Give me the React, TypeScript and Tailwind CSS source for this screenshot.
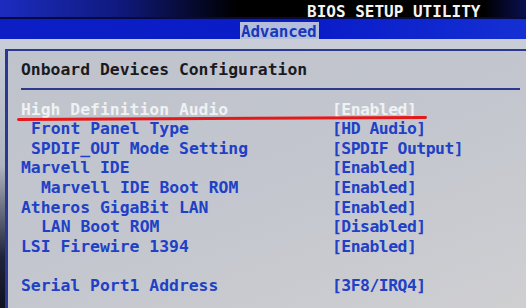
const rows: { label: string; value: string; indent: number; active?: boolean }[] = [
  { label: "High Definition Audio", value: "[Enabled]", indent: 0, active: true },
  { label: "Front Panel Type", value: "[HD Audio]", indent: 1 },
  { label: "SPDIF_OUT Mode Setting", value: "[SPDIF Output]", indent: 1 },
  { label: "Marvell IDE", value: "[Enabled]", indent: 0 },
  { label: "Marvell IDE Boot ROM", value: "[Enabled]", indent: 2 },
  { label: "Atheros GigaBit LAN", value: "[Enabled]", indent: 0 },
  { label: "LAN Boot ROM", value: "[Disabled]", indent: 2 },
  { label: "LSI Firewire 1394", value: "[Enabled]", indent: 0 },
  { label: "", value: "", indent: 0 },
  { label: "Serial Port1 Address", value: "[3F8/IRQ4]", indent: 0 },
];

const indents = ["pl-0", "pl-[10px]", "pl-[20px]"];

export default function App() {
  return (
    <div
      className="w-[526px] h-[308px] overflow-hidden relative flex flex-col bg-[#c6cad3] font-bold"
      style={{ fontFamily: '"DejaVu Sans Mono", "Liberation Mono", monospace' }}
    >
      {/* title bar */}
      <div className="h-[19px] shrink-0 border-b-2 border-[#070a3a] bg-[linear-gradient(to_right,#1c2cc0_0%,#101a80_22%,#000000_45%,#000000_92%,#0a1050_100%)] pt-[4px] pl-[307px]">
        <div className="text-[16px] leading-[16px] text-[#f4f4f4] whitespace-pre">BIOS SETUP UTILITY</div>
      </div>

      {/* tab bar */}
      <div className="h-[20px] shrink-0 bg-[linear-gradient(to_right,#0c1ec4,#0a1cc8_60%,#1430d4)] pt-[3px] pl-[240px]">
        <div className="w-[79px] h-[17px] bg-[#b4bedb] pl-[1px] pt-[1px] text-[16px] leading-[17px] text-[#1838bc] tracking-[-0.2px]">
          Advanced
        </div>
      </div>

      {/* gap strip */}
      <div className="h-[10px] shrink-0 bg-[#c9cdd8]" />

      {/* panel */}
      <div className="flex-1 flex">
        <div className="w-[5px] bg-[linear-gradient(to_bottom,#c6cad3_0%,#b0b4c0_45%,#20243c_80%,#101020_100%)]" />
        <div className="flex-1 border-l-[3px] border-t-2 border-[#2a3890] bg-[linear-gradient(160deg,#bfc3cc_0%,#c3c6ce_50%,#cfcfd2_100%)] pl-[13px] pt-[8.5px]">
          <div className="text-[16.4px] leading-[19.6px] text-[#1a1a22] whitespace-pre">
            Onboard Devices Configuration
          </div>
          <div className="mt-[9px] h-[2px] bg-[#2c3a8c] mr-[6px]" />
          <div className="mt-[9.5px] flex flex-col">
            {rows.map((r, i) => (
              <div
                key={i}
                className={`grid grid-cols-[311px_1fr] h-[19.6px] text-[16.4px] leading-[19.6px] whitespace-pre ${
                  r.active ? "text-[#eef2f2]" : "text-[#2040c6]"
                }`}
              >
                <span className={indents[r.indent]}>{r.label}</span>
                <span className="tracking-[-0.5px]">{r.value}</span>
              </div>
            ))}
          </div>
        </div>
      </div>

      {/* red annotation underline */}
      <div className="absolute left-[17px] top-[116.5px] w-[410px] h-[2.5px] bg-[#e41a1a] rotate-[-0.28deg] rounded-full" />
    </div>
  );
}
